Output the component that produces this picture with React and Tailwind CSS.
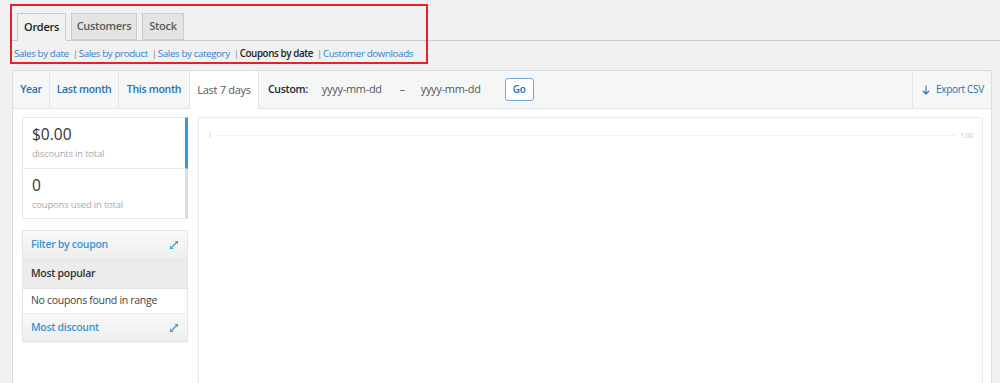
import React from "react";

function Expand() {
  return (
    <svg width="10" height="10" viewBox="0 0 10 10" className="shrink-0">
      <path d="M5.5 1 H9 V4.5 Z" fill="#2ea2cc" />
      <path d="M1 5.5 V9 H4.5 Z" fill="#2ea2cc" />
      <path d="M3 7 L7 3" stroke="#2ea2cc" strokeWidth="1.2" />
    </svg>
  );
}

export default function App() {
  const tabs = [
    { label: "Orders", w: "w-[49px]", active: true },
    { label: "Customers", w: "w-[66px]" },
    { label: "Stock", w: "w-[42px]" },
  ];
  const links = [
    { label: "Sales by date" },
    { label: "Sales by product" },
    { label: "Sales by category" },
    { label: "Coupons by date", current: true },
    { label: "Customer downloads" },
  ];
  return (
    <div className="relative w-[1000px] h-[383px] overflow-hidden bg-[#f1f1f1] font-['Open_Sans','Noto_Sans',sans-serif] text-[#23282d]">
      {/* annotation box */}
      <div className="pointer-events-none absolute left-[10px] top-[4px] w-[418px] h-[60px] border-2 border-[#e3222b]" />

      {/* nav tabs */}
      <nav className="ml-[12px] pt-[13px] pl-[5px] flex gap-[5px] border-b border-[#cccccc]">
        {tabs.map((t) => (
          <div
            key={t.label}
            className={
              t.active
                ? `${t.w} h-[28px] -mb-px flex items-center justify-center border border-[#cccccc] border-b-[#f1f1f1] bg-[#f1f1f1] text-[11px] font-semibold tracking-[-0.3px] text-[#222]`
                : `${t.w} h-[27px] flex items-center justify-center border border-[#cccccc] bg-[#e4e4e4] text-[11px] font-semibold tracking-[-0.3px] text-[#5a5a5a]`
            }
          >
            {t.label}
          </div>
        ))}
      </nav>

      {/* sub links */}
      <div className="ml-[14px] mt-[5px] h-[17px] flex items-center text-[9.8px] tracking-[-0.4px] whitespace-nowrap">
        {links.map((l, i) => (
          <React.Fragment key={l.label}>
            {i > 0 && <span className="text-[#888] pl-[4px] pr-[1px]">|</span>}
            <span className={l.current ? "font-semibold text-[#222]" : "text-[#3582c4]"}>{l.label}</span>
          </React.Fragment>
        ))}
      </div>

      {/* main box */}
      <div className="ml-[12px] mt-[7px] w-[980px] h-[320px] border border-[#dcdcde] bg-white flex flex-col">
        {/* top bar */}
        <div className="h-[38px] shrink-0 flex items-stretch bg-[#f5f6f6] border-b border-[#e2e4e7] text-[10.5px] tracking-[-0.3px] font-semibold">
          <div className="w-[37px] flex items-center justify-center border-r border-[#e5e5e5] text-[#2271b1]">Year</div>
          <div className="w-[69px] flex items-center justify-center border-r border-[#e5e5e5] text-[#2271b1]">Last month</div>
          <div className="w-[71px] flex items-center justify-center border-r border-[#e5e5e5] text-[#2271b1]">This month</div>
          <div className="w-[69px] -mb-px flex items-center justify-center bg-white border-r border-[#e5e5e5] font-normal text-[11px] text-[#50575e]">Last 7 days</div>
          <div className="flex items-center pl-[9px]">
            <span className="text-[#23282d]">Custom:</span>
            <span className="ml-[14px] font-normal text-[11px] text-[#50575e]">yyyy-mm-dd</span>
            <span className="ml-[18px] font-normal text-[#50575e]">–</span>
            <span className="ml-[16px] font-normal text-[11px] text-[#50575e]">yyyy-mm-dd</span>
            <span className="ml-[24px] w-[29px] h-[23px] flex items-center justify-center rounded-[3px] border border-[#7aa7cf] bg-white text-[10px] text-[#2271b1]">Go</span>
          </div>
          <div className="ml-auto w-[79px] flex items-center gap-[6px] pl-[9px] border-l border-[#e5e5e5] font-normal text-[#2271b1] text-[10px]">
            <svg width="8" height="10" viewBox="0 0 8 10">
              <path d="M4 0.5 V9 M1 6 L4 9 L7 6" stroke="#2271b1" strokeWidth="1.1" fill="none" />
            </svg>
            <span>Export CSV</span>
          </div>
        </div>

        {/* body */}
        <div className="flex-1 flex gap-[10px] pt-[8px] pl-[9px] pr-[8px]">
          {/* sidebar */}
          <div className="w-[166px] shrink-0 flex flex-col">
            <div className="h-[52px] border border-[#e8e8e8] border-r-[3px] border-r-[#2e9bdb] pl-[9px] pt-[6px]">
              <div className="text-[15.5px] leading-[20px] text-[#333]">$0.00</div>
              <div className="text-[9.5px] tracking-[-0.2px] text-[#aaa] mt-[3px]">discounts in total</div>
            </div>
            <div className="h-[50px] border border-t-0 border-[#e8e8e8] border-r-[3px] border-r-[#dcdcdc] pl-[9px] pt-[6px]">
              <div className="text-[15.5px] leading-[20px] text-[#333]">0</div>
              <div className="text-[9.5px] tracking-[-0.2px] text-[#aaa] mt-[3px]">coupons used in total</div>
            </div>

            <div className="mt-[11px] border border-[#e5e5e5] text-[10.5px] tracking-[-0.3px] shadow-[0_1px_1px_rgba(0,0,0,0.04)]">
              <div className="h-[29px] flex items-center justify-between px-[8px] bg-gradient-to-b from-[#f9f9f9] to-[#eeeeee] border-b border-[#e5e5e5]">
                <span className="font-semibold text-[#3a95cf]">Filter by coupon</span>
                <Expand />
              </div>
              <div className="h-[29px] flex items-center px-[8px] bg-[#ececec] border-b border-[#e2e2e2] font-semibold text-[#333]">Most popular</div>
              <div className="h-[25px] flex items-center px-[8px] bg-white border-b border-[#e8e8e8] text-[#444]">No coupons found in range</div>
              <div className="h-[27px] flex items-center justify-between px-[8px] bg-gradient-to-b from-[#f9f9f9] to-[#eeeeee]">
                <span className="font-semibold text-[#3a95cf]">Most discount</span>
                <Expand />
              </div>
            </div>
          </div>

          {/* chart */}
          <div className="flex-1 border border-[#ececec] rounded-[2px] shadow-[0_0_2px_rgba(0,0,0,0.05)] pt-[13px] px-[9px]">
            <div className="flex items-center gap-[5px] text-[6.5px] text-[#c4c4c4]">
              <span>1</span>
              <div className="flex-1 h-px bg-[#f0f0f0]" />
              <span>1.00</span>
            </div>
          </div>
        </div>
      </div>
    </div>
  );
}
